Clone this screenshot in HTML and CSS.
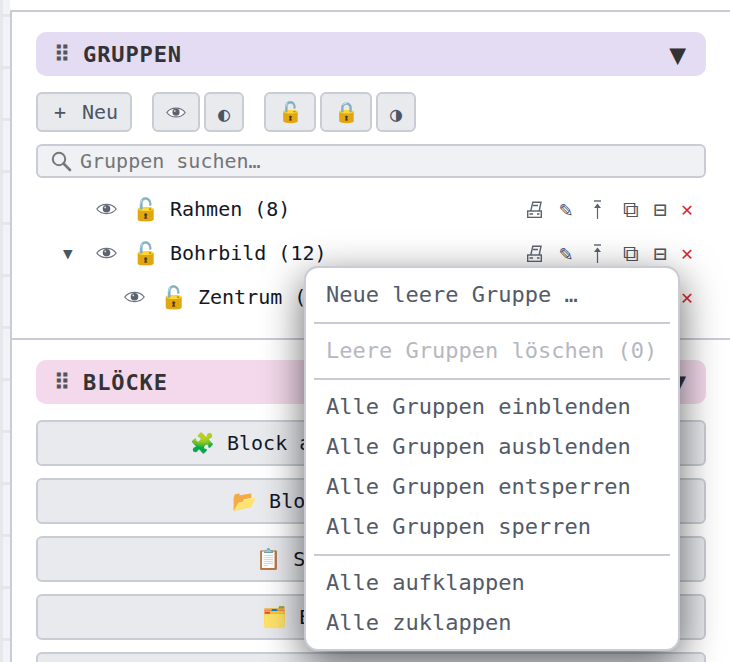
FILE: index.html
```html
<!DOCTYPE html>
<html lang="de">
<head>
    <meta charset="UTF-8">
    <title>Gruppen und Blöcke</title>
    <link rel="stylesheet" href="styles.css">
</head>
<body>

<!-- Icons, wiederverwendet per <use> -->
<svg class="icon-defs" width="0" height="0">
    <symbol id="icon-eye" viewBox="0 0 20 13">
        <path d="M0.8 6.5 C5 0.6 15 0.6 19.2 6.5 C15 12.4 5 12.4 0.8 6.5 Z" fill="#fff" stroke="#6b7280" stroke-width="1.2"/>
        <circle cx="10" cy="6.2" r="3.6" fill="#5b6270"/>
        <circle cx="8.8" cy="5" r="0.9" fill="#d8dae0"/>
    </symbol>
    <symbol id="icon-printer" viewBox="0 0 15 17">
        <path d="M3.8 10 L5.8 1.2 H14 L12.2 10 M6 4.5 H11" fill="none" stroke="#5b6270" stroke-width="1.4"/>
        <rect x="0.7" y="10" width="13.6" height="6.4" fill="#fff" stroke="#5b6270" stroke-width="1.4"/>
        <path d="M2.5 13 H6 M10 13 H12.5" stroke="#5b6270" stroke-width="1.5"/>
    </symbol>
    <symbol id="icon-top" viewBox="0 0 9 19">
        <path d="M1 1 H8" stroke="#5b6270" stroke-width="1.4"/>
        <path d="M4.5 3.5 L8 8 H1 Z" fill="#5b6270"/>
        <path d="M4.5 7 V19" stroke="#5b6270" stroke-width="1.2"/>
    </symbol>
</svg>

<div class="app">
    <div class="canvas-strip"></div>

    <div class="panel">
        <!-- Gruppen -->
        <section class="section">
            <div class="section-head head-groups">
                <span class="grip">⠿</span>
                <span class="section-title">GRUPPEN</span>
                <span class="collapse">▼</span>
            </div>

            <div class="toolbar">
                <button class="tool tool-new"><span class="plus">+</span>Neu</button>
                <div class="tool-group">
                    <button class="tool tool-eye"><svg width="20" height="13"><use href="#icon-eye"/></svg></button>
                    <button class="tool tool-half">◐</button>
                </div>
                <div class="tool-group">
                    <button class="tool tool-lock">🔓</button>
                    <button class="tool tool-lock">🔒</button>
                    <button class="tool tool-half">◑</button>
                </div>
            </div>

            <div class="search">
                <svg class="search-icon" width="22" height="22" viewBox="0 0 22 22">
                    <circle cx="9" cy="9" r="6.2" fill="none" stroke="#777" stroke-width="2"/>
                    <path d="M13.5 13.5 L20 20" stroke="#777" stroke-width="2.6" stroke-linecap="round"/>
                </svg>
                <input type="text" placeholder="Gruppen suchen…">
            </div>

            <div class="tree">
                <div class="row">
                    <span class="toggle"></span>
                    <span class="row-eye"><svg width="21" height="14"><use href="#icon-eye"/></svg></span>
                    <span class="row-lock">🔓</span>
                    <span class="row-name">Rahmen (8)</span>
                    <div class="actions">
                        <span><svg width="15" height="17"><use href="#icon-printer"/></svg></span><span>✎</span><span><svg width="9" height="19"><use href="#icon-top"/></svg></span><span>⧉</span><span>⊟</span><span class="del">✕</span>
                    </div>
                </div>
                <div class="row">
                    <span class="toggle">▼</span>
                    <span class="row-eye"><svg width="21" height="14"><use href="#icon-eye"/></svg></span>
                    <span class="row-lock">🔓</span>
                    <span class="row-name">Bohrbild (12)</span>
                    <div class="actions">
                        <span><svg width="15" height="17"><use href="#icon-printer"/></svg></span><span>✎</span><span><svg width="9" height="19"><use href="#icon-top"/></svg></span><span>⧉</span><span>⊟</span><span class="del">✕</span>
                    </div>
                </div>
                <div class="row row-child">
                    <span class="toggle"></span>
                    <span class="row-eye"><svg width="21" height="14"><use href="#icon-eye"/></svg></span>
                    <span class="row-lock">🔓</span>
                    <span class="row-name">Zentrum (4)</span>
                    <div class="actions">
                        <span><svg width="15" height="17"><use href="#icon-printer"/></svg></span><span>✎</span><span><svg width="9" height="19"><use href="#icon-top"/></svg></span><span>⧉</span><span>⊟</span><span class="del">✕</span>
                    </div>
                </div>
            </div>
        </section>

        <!-- Blöcke -->
        <section class="section section-blocks">
            <div class="section-head head-blocks">
                <span class="grip">⠿</span>
                <span class="section-title">BLÖCKE</span>
                <span class="collapse">▼</span>
            </div>

            <div class="block-list">
                <button class="block-btn">🧩 Block aus Auswahl erstellen</button>
                <button class="block-btn">📂 Block-Datei einfügen</button>
                <button class="block-btn">📋 Stückliste laden</button>
                <button class="block-btn">🗂️ Blockbibliothek</button>
                <button class="block-btn"></button>
            </div>
        </section>
    </div>
</div>

<!-- Kontextmenü -->
<div class="menu">
    <div class="menu-item">Neue leere Gruppe …</div>
    <div class="menu-sep"></div>
    <div class="menu-item disabled">Leere Gruppen löschen (0)</div>
    <div class="menu-sep"></div>
    <div class="menu-item">Alle Gruppen einblenden</div>
    <div class="menu-item">Alle Gruppen ausblenden</div>
    <div class="menu-item">Alle Gruppen entsperren</div>
    <div class="menu-item">Alle Gruppen sperren</div>
    <div class="menu-sep"></div>
    <div class="menu-item">Alle aufklappen</div>
    <div class="menu-item">Alle zuklappen</div>
</div>

</body>
</html>
```

FILE: styles.css
```css
/* Global */
html, body {
    margin: 0;
    padding: 0;
    height: 662px;
    overflow: hidden;
    background: #fff;
    font-family: "DejaVu Sans Mono", monospace;
    color: #111827;
}

button {
    font-family: inherit;
}

.icon-defs {
    display: block;
}

.app {
    display: flex;
    height: 662px;
    overflow: hidden;
}

/* Zeichenfläche links */
.canvas-strip {
    width: 10px;
    flex: none;
    background-color: #f1f3f7;
    background-image:
        repeating-linear-gradient(to bottom, transparent 0, transparent 14px, #e4e6ea 14px, #e4e6ea 17px, transparent 17px, transparent 52px),
        linear-gradient(to right, #e6e8ec 3px, transparent 3px);
}

.panel {
    flex: 1;
    margin-top: 10px;
    border-top: 2px solid #c9ccd4;
    border-left: 2px solid #c9ccd4;
    background: #fff;
}

/* Sections */
.section {
    padding: 20px 24px 0;
}

.section-blocks {
    margin-top: 19px;
    border-top: 2px solid #c9ccd4;
}

.section-head {
    display: flex;
    align-items: center;
    height: 44px;
    padding: 0 20px 0 18px;
    border-radius: 10px;
    color: #333;
}

.head-groups {
    background: #e4dcf3;
}

.head-blocks {
    background: #f3d9eb;
}

.grip {
    width: 29px;
    font-size: 22px;
    font-weight: 700;
    color: #555;
}

.section-title {
    flex: 1;
    font-size: 22px;
    font-weight: 700;
    letter-spacing: 0.88px;
}

.collapse {
    font-size: 28px;
}

/* Toolbar */
.toolbar {
    display: flex;
    gap: 20px;
    margin-top: 16px;
}

.tool-group {
    display: flex;
    gap: 4px;
}

.tool {
    display: flex;
    align-items: center;
    justify-content: center;
    height: 40px;
    padding: 0;
    border: 2px solid #c9ccd4;
    border-radius: 6px;
    background: #e8eaee;
    color: #4b5563;
    font-size: 20px;
}

.tool-new {
    width: 96px;
    padding-left: 4px;
}

.plus {
    margin-right: 16px;
}

.tool-eye {
    width: 48px;
}

.tool-half {
    width: 40px;
    padding-top: 4px;
}

.tool-lock {
    width: 52px;
}

/* Suche */
.search {
    display: flex;
    align-items: center;
    gap: 8px;
    height: 34px;
    margin-top: 12px;
    padding: 0 12px;
    border: 2px solid #c9ccd4;
    border-radius: 6px;
    background: #f0f1f5;
    box-sizing: border-box;
}

.search input {
    flex: 1;
    min-width: 0;
    border: none;
    padding: 0;
    background: transparent;
    font-family: inherit;
    font-size: 20px;
}

.search input::placeholder {
    color: #757575;
    opacity: 1;
}

/* Baum */
.tree {
    margin-top: 9px;
}

.row {
    display: flex;
    align-items: center;
    height: 44px;
    font-size: 20px;
}

.toggle {
    width: 33px;
    margin-left: 27px;
    color: #4b5563;
    font-size: 16px;
}

.row-child .toggle {
    margin-left: 55px;
}

.row-eye {
    display: flex;
    width: 36px;
}

.row-lock {
    width: 38px;
    font-size: 22px;
}

.row-name {
    flex: 1;
}

.actions {
    display: flex;
    align-items: center;
    margin-right: 4px;
    color: #4b5563;
    font-size: 22px;
}

.actions span {
    display: flex;
    justify-content: center;
    width: 31px;
}

.actions span:first-child {
    width: 31px;
}

.actions span:nth-child(3) {
    width: 32px;
}

.actions span:nth-child(4) {
    width: 35px;
}

.actions span:nth-child(5) {
    width: 24px;
}

.actions .del {
    width: 30px;
    color: #dc2626;
    font-size: 20px;
}

/* Blöcke */
.block-list {
    display: flex;
    flex-direction: column;
    gap: 12px;
    margin-top: 16px;
}

.block-btn {
    flex: none;
    height: 46px;
    border: 2px solid #c9ccd4;
    border-radius: 6px;
    background: #e8eaee;
    color: #111827;
    font-size: 20px;
}

/* Kontextmenü */
.menu {
    position: absolute;
    left: 304px;
    top: 266px;
    width: 376px;
    box-sizing: border-box;
    padding: 7px 0 6px;
    border: 2px solid #c9ccd4;
    border-radius: 14px;
    background: #fff;
    box-shadow: 0 12px 40px rgba(0, 0, 0, 0.6);
}

.menu-item {
    height: 40px;
    line-height: 40px;
    padding-left: 20px;
    color: #535a68;
    font-size: 22px;
    white-space: nowrap;
}

.menu-item.disabled {
    color: #b5b8bf;
}

.menu-sep {
    height: 2px;
    margin: 7px 8px;
    background: #c9ccd4;
}
```
